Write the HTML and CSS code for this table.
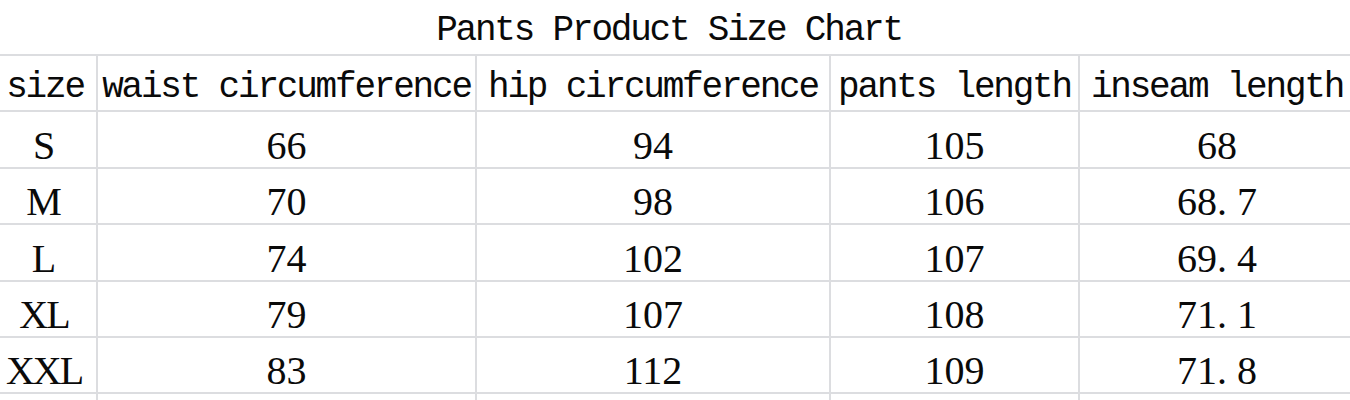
FILE: index.html
```html
<!DOCTYPE html>
<html lang="en">
<head>
<meta charset="utf-8">
<title>Pants Product Size Chart</title>
<link rel="stylesheet" href="styles.css">
</head>
<body>
<div class="sheet">
  <div class="title">Pants Product Size Chart</div>
  <div class="grid">
    <div class="cell head c1">size</div>
    <div class="cell head">waist circumference</div>
    <div class="cell head">hip circumference</div>
    <div class="cell head">pants length</div>
    <div class="cell head c5">inseam length</div>

    <div class="cell num c1">S</div>
    <div class="cell num">66</div>
    <div class="cell num">94</div>
    <div class="cell num">105</div>
    <div class="cell num c5">68</div>

    <div class="cell num c1">M</div>
    <div class="cell num">70</div>
    <div class="cell num">98</div>
    <div class="cell num">106</div>
    <div class="cell num c5">68<span class="dot">.</span>7</div>

    <div class="cell num c1">L</div>
    <div class="cell num">74</div>
    <div class="cell num">102</div>
    <div class="cell num">107</div>
    <div class="cell num c5">69<span class="dot">.</span>4</div>

    <div class="cell num c1 tight">XL</div>
    <div class="cell num">79</div>
    <div class="cell num">107</div>
    <div class="cell num">108</div>
    <div class="cell num c5">71<span class="dot">.</span>1</div>

    <div class="cell num c1 tight">XXL</div>
    <div class="cell num">83</div>
    <div class="cell num">112</div>
    <div class="cell num">109</div>
    <div class="cell num c5">71<span class="dot">.</span>8</div>

    <div class="cell c1"></div>
    <div class="cell"></div>
    <div class="cell"></div>
    <div class="cell"></div>
    <div class="cell c5"></div>
  </div>
</div>
</body>
</html>
```

FILE: styles.css
```css
html, body {
  margin: 0;
  padding: 0;
  background: #ffffff;
  overflow: hidden;
}

.sheet {
  width: 1354px;
  color: #0a0a0a;
}

.title {
  height: 54px;
  width: 1350px;
  box-sizing: border-box;
  padding-right: 12px;
  padding-bottom: 5px;
  display: flex;
  align-items: flex-end;
  justify-content: center;
  font-family: "Liberation Mono", monospace;
  font-size: 36px;
  letter-spacing: -2.2px;
  line-height: 1;
}

.grid {
  display: grid;
  grid-template-columns: 98px 379px 354px 249px 274px;
  grid-template-rows: 56px 57px 56px 57px 56px 56px 20px;
  border-top: 2px solid #dcdde0;
}

.cell {
  box-sizing: border-box;
  border-right: 2px solid #dcdde0;
  border-bottom: 2px solid #dcdde0;
  display: flex;
  align-items: flex-end;
  justify-content: center;
  white-space: nowrap;
  line-height: 1;
}

.c1 {
  padding-right: 8px;
}

.c5 {
  border-right: none;
}

.head {
  font-family: "Liberation Mono", monospace;
  font-size: 36px;
  letter-spacing: -2.2px;
  padding-bottom: 4px;
}

.head.c1 {
  padding-right: 6px;
}

.num {
  font-family: "Liberation Serif", serif;
  font-size: 40px;
  padding-bottom: 1px;
}

.tight {
  letter-spacing: -2px;
}

.dot {
  display: inline-block;
  width: 0.5em;
  text-align: left;
}
```
